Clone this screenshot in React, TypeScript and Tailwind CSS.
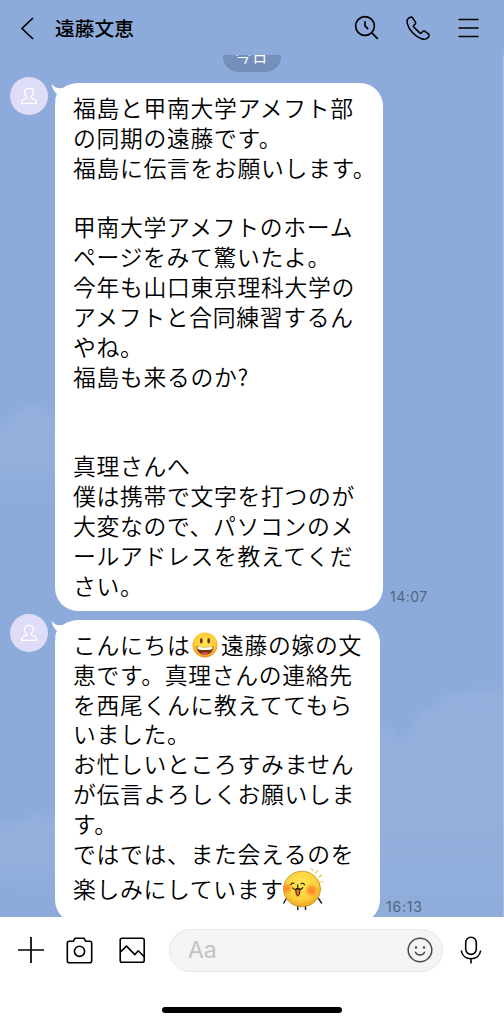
import type { ReactNode } from "react";

const first = [
  "福島と甲南大学アメフト部",
  "の同期の遠藤です。",
  "福島に伝言をお願いします。",
  "",
  "甲南大学アメフトのホーム",
  "ページをみて驚いたよ。",
  "今年も山口東京理科大学の",
  "アメフトと合同練習するん",
  "やね。",
  "福島も来るのか?",
  "",
  "",
  "真理さんへ",
  "僕は携帯で文字を打つのが",
  "大変なので、パソコンのメ",
  "ールアドレスを教えてくだ",
  "さい。",
];

const second = [
  "恵です。真理さんの連絡先",
  "を西尾くんに教えててもら",
  "いました。",
  "お忙しいところすみません",
  "が伝言よろしくお願いしま",
  "す。",
  "ではでは、また会えるのを",
];

function Avatar() {
  return (
    <svg className="mt-[-5.5px] h-[38px] w-[38px] shrink-0" viewBox="0 0 38 38" fill="none">
      <circle cx="19" cy="19" r="19" fill="#dfdcf8" />
      <path
        d="M16.500 19.500c-1.300-1-2-2.400-2-4 0-2.500 1.900-4.200 4.500-4.200s4.500 1.700 4.500 4.200c0 1.600-.7 3-2 4-.6.5-.5 1.500.3 1.800 2.500.7 4.500 1.700 4.500 3.700v1.300H11.700V25c0-2 2-3 4.500-3.700.8-.3.9-1.300.3-1.800Z"
        stroke="#fff"
        strokeWidth="1.300"
      />
    </svg>
  );
}

function Tail() {
  return (
    <svg className="absolute -left-[4px] top-0 h-[20px] w-[22px]" viewBox="0 0 22 20">
      <path d="M.7 1C3.500 4.600 7.500 5.900 12 4.800L17 2 20 9 10 18H4.300C4.300 15 4.800 13 6 11 3 8.500 1 5 .7 1Z" fill="#fff" />
    </svg>
  );
}

function Line({ children }: { children?: ReactNode }) {
  return <div className="relative flex h-[29.87px] items-center whitespace-pre">{children}</div>;
}

function Smile() {
  return (
    <svg className="mr-[3px] ml-[1.500px] h-[26px] w-[26px] shrink-0" viewBox="0 0 26 26">
      <defs>
        <radialGradient id="smile" cx=".5" cy=".4" r=".6">
          <stop offset="0" stopColor="#ffe75a" />
          <stop offset=".7" stopColor="#ffc933" />
          <stop offset="1" stopColor="#ee8d19" />
        </radialGradient>
      </defs>
      <circle cx="13" cy="13" r="12.500" fill="url(#smile)" />
      <ellipse cx="9.300" cy="8.800" rx="1.400" ry="2.700" fill="#69320c" />
      <ellipse cx="16.700" cy="8.800" rx="1.400" ry="2.700" fill="#69320c" />
      <path d="M4.500 14.200q8.500 2.800 17 0c-.3 5.500-3.800 8.600-8.500 8.600s-8.200-3.100-8.500-8.600Z" fill="#75330b" />
      <path d="M5.300 14.500q7.700 2.200 15.400 0-.1 3-1.600 3-6.100 1.200-12.200 0-1.500 0-1.600-3Z" fill="#fff" />
      <path d="M9 21.500q4-2.500 8 0-4 2.200-8 0Z" fill="#ef5360" />
    </svg>
  );
}

function Sticker() {
  return (
    <svg className="-ml-[1px] h-[44px] w-[42px] shrink-0" viewBox="0 0 42 44" fill="none" strokeLinecap="round">
      <defs>
        <radialGradient id="body" cx=".48" cy=".36" r=".65">
          <stop offset="0" stopColor="#ffe653" />
          <stop offset=".65" stopColor="#fdd03a" />
          <stop offset="1" stopColor="#e9a41f" />
        </radialGradient>
        <radialGradient id="cheek">
          <stop offset="0" stopColor="#fb8428" />
          <stop offset=".5" stopColor="#fb9130" stopOpacity=".85" />
          <stop offset="1" stopColor="#fba32f" stopOpacity="0" />
        </radialGradient>
        <clipPath id="face">
          <ellipse cx="19" cy="22" rx="18.500" ry="17.800" />
        </clipPath>
      </defs>
      <path d="M3.300 31.500.8 36M35.500 31.500l3 4.500M14.800 38.500V42.600M22.500 38.500V42.600" stroke="#222" strokeWidth="1.500" />
      <ellipse cx="19" cy="22" rx="18.500" ry="17.800" fill="url(#body)" stroke="#b48425" strokeWidth=".7" />
      <g clipPath="url(#face)">
        <circle cx="3.800" cy="21.500" r="6" fill="url(#cheek)" />
        <circle cx="28.500" cy="23.500" r="7" fill="url(#cheek)" />
      </g>
      <path d="M12.700 22.300q.2 6.700 2.100 6.700T17 22.300Z" fill="#f4702a" stroke="#2a1a08" strokeWidth="1" />
      <path d="M9.800 21q2.400 3 4.900.2 2.600 2.700 5-.5M14.700 17.800v3.400M7.800 17.500q1.200-2 2.900-1.200M18 16.700q2.200-1.300 3.500 1" stroke="#21170a" strokeWidth="1.200" />
      <path d="m28.500 1.500 1.200 2M34.500 3.500l-2 2.700M38.500 8l-2.500 2.200M40 14.700l-2.200.3" stroke="#f2c34b" strokeWidth="1.200" />
    </svg>
  );
}

function Clouds() {
  return (
    <svg className="absolute inset-0 h-[917px] w-[504px]" viewBox="0 0 504 917">
      <defs>
        <filter id="soft" x="-30%" y="-20%" width="160%" height="140%">
          <feGaussianBlur stdDeviation="4" />
        </filter>
        <linearGradient id="mist" x1="0" y1="0" x2="0" y2="1">
          <stop offset="0" stopColor="#99b2df" stopOpacity=".7" />
          <stop offset=".5" stopColor="#98b1dd" stopOpacity=".75" />
          <stop offset="1" stopColor="#93aedb" stopOpacity=".1" />
        </linearGradient>
      </defs>
      <g fill="url(#mist)" filter="url(#soft)">
        <path d="M-20 430 5 427 12 417 24 408 35 405 43 412 70 425V505L-20 495Z" />
        <path d="M-20 825 20 823 35 815 70 823V900L-20 875Z" />
        <path d="M365 728 391 729 398 748 410 732 419 715 436 708 445 697 465 693 530 687V950H365Z" />
      </g>
    </svg>
  );
}

export default function App() {
  return (
    <div className="relative flex h-[1024px] w-[504px] flex-col overflow-hidden bg-white font-['Noto_Sans_CJK_JP',sans-serif] text-black">
      <header className="absolute inset-x-0 top-0 z-10 flex h-[55px] items-center bg-[#8dabda]/95 pl-[20px]">
        <svg className="h-[24px] w-[15px]" viewBox="0 0 15 24" fill="none" stroke="#000" strokeWidth="1.700">
          <path d="M13 2 2 12.500 13 23" />
        </svg>
        <h1 className="ml-[20px] mt-[1px] flex-1 text-[19.8px] leading-[30px] font-medium">遠藤文恵</h1>
        <svg className="h-[26px] w-[26px]" viewBox="0 0 26 26" fill="none" stroke="#000" strokeWidth="1.700">
          <circle cx="11" cy="11" r="9.400" />
          <path d="m17.800 17.800 6 6M11 6.300v4.500l3.200 3.300" />
        </svg>
        <svg className="ml-[25px] h-[26px] w-[26px]" viewBox="0 0 26 26" fill="none" stroke="#000" strokeWidth="1.600" strokeLinejoin="round">
          <path d="M5.300 2.300C3 3.200 1.500 5.500 2.300 8.600c1.700 6.600 7.600 12.600 14.200 15.200 3.500 1.300 6.700-.1 7.600-3 .2-.8-.1-1.500-.7-2l-3.500-2.500c-.7-.5-1.500-.4-2.100.2l-1.500 1.400c-.4.4-1 .4-1.500 0L8.700 12c-.4-.5-.4-1 0-1.400L10.200 9c.6-.6.600-1.400.1-2.100L7.500 2.800c-.5-.7-1.300-.8-2.200-.5Z" />
        </svg>
        <svg className="mr-[25px] ml-[27px] h-[20px] w-[21px]" viewBox="0 0 21 20" stroke="#000" strokeWidth="1.700">
          <path d="M.5 1.500h20M.5 10h20M.5 18.500h20" />
        </svg>
      </header>

      <main className="relative flex h-[917px] shrink-0 flex-col overflow-hidden border-r border-[#a9bfe3] bg-[#8dabda] pt-[41px]">
        <Clouds />
        <div className="relative ml-[223px] flex h-[31px] w-[58px] shrink-0 items-center justify-center rounded-full bg-[#748fb9] pb-[2px] text-[15.5px] leading-none tracking-[1px] text-white">
          今日
        </div>

        <div className="relative mt-[10.5px] flex items-start pl-[10px]">
          <Avatar />
          <div className="relative ml-[7px] h-[528.5px] w-[328px] rounded-[23px] bg-white pt-[10.5px] pl-[18px] text-[22.8px] font-[350] tracking-[0.7px]">
            <Tail />
            {first.map((t, i) => (
              <Line key={i}>{t}</Line>
            ))}
          </div>
          <time className="ml-[7px] self-end pb-[4px] font-[Inter,sans-serif] text-[14px] leading-[20px] tracking-[0.5px] text-[#536581]">14:07</time>
        </div>

        <div className="relative mt-[8.5px] flex items-start pl-[10px]">
          <Avatar />
          <div className="relative ml-[7px] h-[303px] w-[324.5px] rounded-[23px] bg-white pt-[10.5px] pl-[18px] text-[22.8px] font-[350] tracking-[0.7px]">
            <Tail />
            <Line>
              <span>こんにちは</span>
              <Smile />
              <span>遠藤の嫁の文</span>
            </Line>
            {second.map((t) => (
              <Line key={t}>{t}</Line>
            ))}
            <div className="flex h-[40px] items-center">
              <span>楽しみにしています</span>
              <Sticker />
            </div>
          </div>
          <time className="ml-[6.5px] self-end pb-[6px] font-[Inter,sans-serif] text-[14px] leading-[20px] tracking-[0.8px] text-[#536581]">16:13</time>
        </div>
      </main>

      <footer className="flex flex-1 flex-col items-center">
        <div className="mt-[11px] flex h-[44px] w-full items-center pl-[18px]">
          <svg className="h-[26px] w-[26px]" viewBox="0 0 26 26" stroke="#000" strokeWidth="1.700">
            <path d="M0 13h26M13 0v26" />
          </svg>
          <svg className="ml-[22px] h-[27px] w-[27px]" viewBox="0 0 27 27" fill="none" stroke="#000" strokeWidth="1.600" strokeLinejoin="round">
            <path d="M3.300 4.200H7.500L9 1.200h9l1.500 3h4.200q2 0 2 2v17.500q0 2-2 2H3.300q-2 0-2-2V6.200q0-2 2-2Z" />
            <circle cx="13.500" cy="14.300" r="5.100" />
          </svg>
          <svg className="ml-[26px] h-[27px] w-[27px]" viewBox="0 0 27 27" fill="none" stroke="#000" strokeWidth="1.600" strokeLinejoin="round">
            <rect x="1.200" y="1.200" width="24" height="24" rx="1.800" />
            <path d="m1.500 14.800 6-5.700 8.300 8.500 3.500-3.800 5.900 6" />
          </svg>
          <div className="ml-[23px] flex h-[43px] w-[274px] items-center justify-between rounded-full border border-[#e7e7e7] bg-[#f4f4f4] pr-[9px] pl-[18px]">
            <span className="font-[Inter,sans-serif] text-[23px] leading-none text-[#c2c2c2]">Aa</span>
            <svg className="h-[26px] w-[26px]" viewBox="0 0 26 26" fill="none" stroke="#4b4b4b" strokeWidth="1.500" strokeLinecap="round">
              <circle cx="13" cy="13" r="11.800" />
              <path d="M8.500 15.200c1.700 3.700 7.300 3.700 9 0" />
              <circle cx="9" cy="10.500" r="1.200" fill="#4b4b4b" stroke="none" />
              <circle cx="17" cy="10.500" r="1.200" fill="#4b4b4b" stroke="none" />
            </svg>
          </div>
          <svg className="ml-[17px] h-[28px] w-[22px]" viewBox="0 0 22 28" fill="none" stroke="#000" strokeWidth="1.600">
            <rect x="5.700" y="1.200" width="10.600" height="17.200" rx="5.300" />
            <path d="M1.300 14.500c.8 5.200 4.800 8.200 9.700 8.200s8.900-3 9.700-8.200M11 22.700v4.800" />
          </svg>
        </div>
        <div className="mt-[35px] h-[5.5px] w-[180px] rounded-full bg-black" />
      </footer>
    </div>
  );
}
